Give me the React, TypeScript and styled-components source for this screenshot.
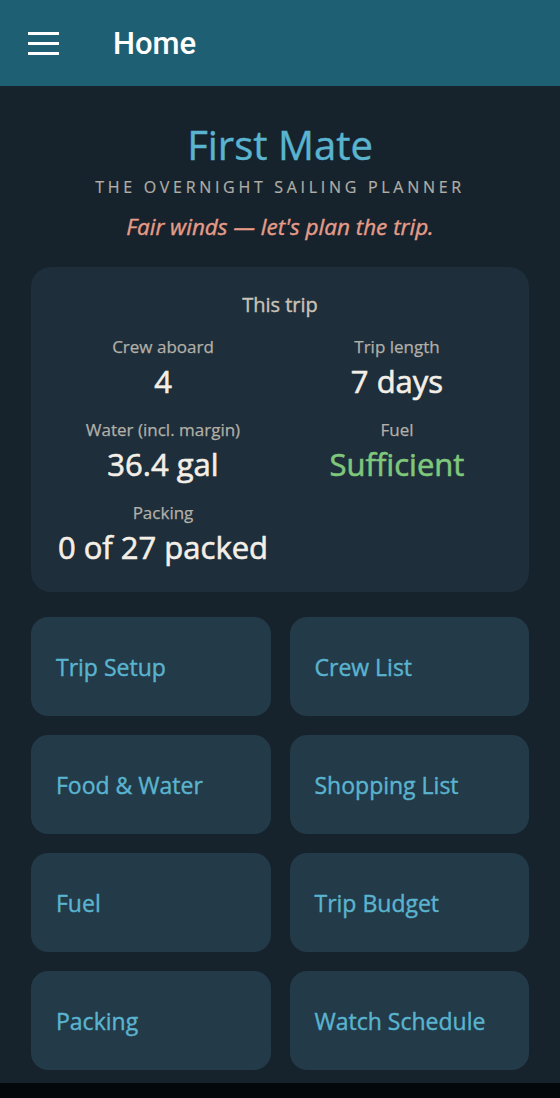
import React from "react";
import styled, { createGlobalStyle } from "styled-components";

const GlobalStyle = createGlobalStyle`
  html, body {
    margin: 0;
    padding: 0;
    background: #03080b;
    font-family: "Open Sans", "Noto Sans", sans-serif;
  }
  * {
    box-sizing: border-box;
  }
`;

const TopBar = styled.header`
  height: 86px;
  background: #1f5f74;
  display: flex;
  align-items: center;
  padding-left: 28px;
  gap: 54px;
`;

const MenuButton = styled.div`
  width: 31px;
  display: flex;
  flex-direction: column;
  gap: 7px;
  span {
    display: block;
    height: 3px;
    background: #ffffff;
  }
`;

const BarTitle = styled.h1`
  margin: 0;
  color: #ffffff;
  font-family: Roboto, "Noto Sans", sans-serif;
  font-weight: 500;
  font-size: 31px;
`;

const Page = styled.main`
  background: #16232d;
  padding: 34px 31px 13px;
  display: flex;
  flex-direction: column;
  -webkit-text-stroke: 0.4px currentColor;
`;

const Hero = styled.div`
  text-align: center;
  margin-bottom: 26px;
  .title {
    margin: 0;
    font-size: 40px;
    font-weight: 400;
    color: #5ab4cf;
    line-height: 50px;
  }
  .subtitle {
    margin-top: 6px;
    font-size: 16px;
    letter-spacing: 3.7px;
    color: #b0aea6;
    line-height: 22px;
    -webkit-text-stroke: 0.2px currentColor;
  }
  .tagline {
    margin-top: 15px;
    font-size: 22.5px;
    font-style: italic;
    color: #e59c88;
    line-height: 28px;
  }
`;

const SummaryCard = styled.section`
  background: #1e2e3b;
  border-radius: 20px;
  padding: 24px 20px 23px;
  .heading {
    text-align: center;
    font-size: 20px;
    color: #c9c3b6;
    line-height: 28px;
    margin-bottom: 16px;
  }
`;

const StatGrid = styled.div`
  display: grid;
  grid-template-columns: 1fr 1fr;
  column-gap: 10px;
  row-gap: 15px;
`;

const Stat = styled.div<{ $good?: boolean }>`
  text-align: center;
  .label {
    font-size: 17px;
    color: #b3b0a8;
    line-height: 24px;
    -webkit-text-stroke: 0.25px currentColor;
  }
  .value {
    font-size: 31px;
    line-height: 44px;
    color: ${(p) => (p.$good ? "#7fc77b" : "#f4efe6")};
    white-space: nowrap;
    -webkit-text-stroke: 0.6px currentColor;
  }
`;

const NavGrid = styled.nav`
  margin-top: 25px;
  display: grid;
  grid-template-columns: 1fr 1fr;
  gap: 19px;
`;

const NavButton = styled.button`
  height: 99px;
  border: none;
  border-radius: 17px;
  background: #233a48;
  color: #5ab4cf;
  font-family: "Open Sans", "Noto Sans", sans-serif;
  font-size: 23px;
  text-align: left;
  padding: 0 25px;
  cursor: pointer;
  -webkit-text-stroke: 0.4px currentColor;
`;

const stats = [
  { label: "Crew aboard", value: "4" },
  { label: "Trip length", value: "7 days" },
  { label: "Water (incl. margin)", value: "36.4 gal" },
  { label: "Fuel", value: "Sufficient", good: true },
  { label: "Packing", value: "0 of 27 packed" },
];

const screens = [
  "Trip Setup",
  "Crew List",
  "Food & Water",
  "Shopping List",
  "Fuel",
  "Trip Budget",
  "Packing",
  "Watch Schedule",
];

const App = () => {
  return (
    <>
      <GlobalStyle />
      <TopBar>
        <MenuButton>
          <span />
          <span />
          <span />
        </MenuButton>
        <BarTitle>Home</BarTitle>
      </TopBar>
      <Page>
        <Hero>
          <h2 className="title">First Mate</h2>
          <div className="subtitle">THE OVERNIGHT SAILING PLANNER</div>
          <div className="tagline">Fair winds — let's plan the trip.</div>
        </Hero>
        <SummaryCard>
          <div className="heading">This trip</div>
          <StatGrid>
            {stats.map((s) => (
              <Stat key={s.label} $good={s.good}>
                <div className="label">{s.label}</div>
                <div className="value">{s.value}</div>
              </Stat>
            ))}
          </StatGrid>
        </SummaryCard>
        <NavGrid>
          {screens.map((name) => (
            <NavButton key={name}>{name}</NavButton>
          ))}
        </NavGrid>
      </Page>
    </>
  );
};

export default App;
